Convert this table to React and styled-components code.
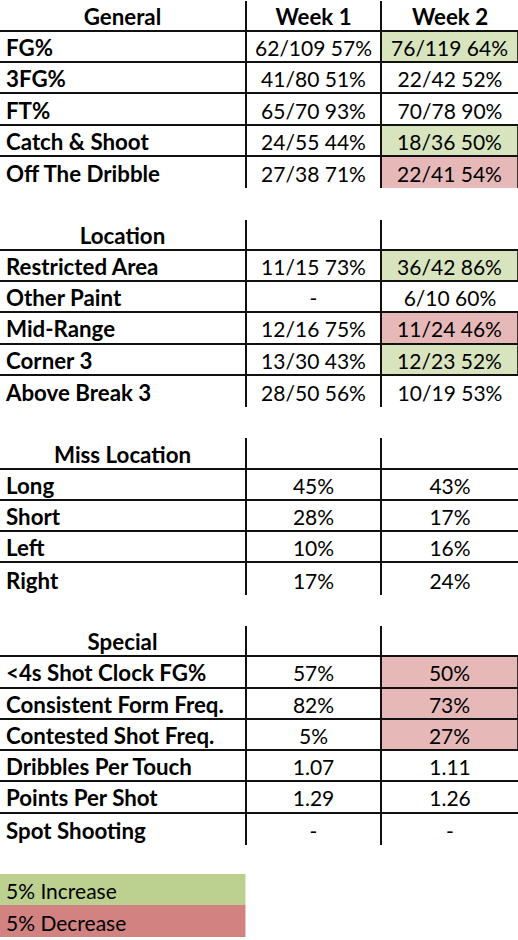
import styled, { createGlobalStyle } from "styled-components";

const Global = createGlobalStyle`
  html, body {
    margin: 0;
    padding: 0;
    background: #ffffff;
  }
  body {
    font-family: Lato, "Liberation Sans", sans-serif;
    color: #000;
  }
`;

const ROW = 31.28;

const Sheet = styled.div`
  width: 518px;
  padding-top: 0.7px;
  display: flex;
  flex-direction: column;
`;

const Section = styled.div`
  display: flex;
  flex-direction: column;
  margin-bottom: ${ROW}px;
`;

const Row = styled.div`
  display: grid;
  grid-template-columns: 245px 135px 1fr;
  height: ${ROW}px;
  box-sizing: border-box;
  border-bottom: ${(p) => (p.$last ? "none" : "2px solid #111")};
`;

const Cell = styled.div`
  display: flex;
  align-items: center;
  justify-content: ${(p) => (p.$left ? "flex-start" : "center")};
  padding: 2px 0 0 ${(p) => (p.$left ? "6px" : "0")};
  font-size: ${(p) => (p.$bold ? "22.3px" : "21px")};
  font-weight: ${(p) => (p.$bold ? 700 : 400)};
  white-space: nowrap;
  box-sizing: border-box;
  background: ${(p) =>
    p.$tone === "up" ? "#d7e4bd" : p.$tone === "down" ? "#e6b9b8" : "transparent"};
  border-left: ${(p) => (p.$divider ? "2px solid #111" : "none")};
  border-right: ${(p) => (p.$edge ? "1px solid #333" : "none")};
`;

const Legend = styled.div`
  width: 246px;
  display: flex;
  flex-direction: column;
  margin-top: -2px;
`;

const Swatch = styled.div`
  height: ${ROW}px;
  display: flex;
  align-items: center;
  padding: 2px 0 0 6px;
  box-sizing: border-box;
  font-size: 21px;
  background: ${(p) => (p.$tone === "up" ? "#bcd18f" : "#d18281")};
  border-right: 1px solid
    ${(p) => (p.$tone === "up" ? "#dfe9c8" : "#ecc4c3")};
`;

const sections = [
  {
    title: "General",
    heads: ["Week 1", "Week 2"],
    rows: [
      ["FG%", "62/109 57%", "76/119 64%", "up"],
      ["3FG%", "41/80 51%", "22/42 52%"],
      ["FT%", "65/70 93%", "70/78 90%"],
      ["Catch & Shoot", "24/55 44%", "18/36 50%", "up"],
      ["Off The Dribble", "27/38 71%", "22/41 54%", "down"],
    ],
  },
  {
    title: "Location",
    heads: ["", ""],
    rows: [
      ["Restricted Area", "11/15 73%", "36/42 86%", "up"],
      ["Other Paint", "-", "6/10 60%"],
      ["Mid-Range", "12/16 75%", "11/24 46%", "down"],
      ["Corner 3", "13/30 43%", "12/23 52%", "up"],
      ["Above Break 3", "28/50 56%", "10/19 53%"],
    ],
  },
  {
    title: "Miss Location",
    heads: ["", ""],
    rows: [
      ["Long", "45%", "43%"],
      ["Short", "28%", "17%"],
      ["Left", "10%", "16%"],
      ["Right", "17%", "24%"],
    ],
  },
  {
    title: "Special",
    heads: ["", ""],
    rows: [
      ["<4s Shot Clock FG%", "57%", "50%", "down"],
      ["Consistent Form Freq.", "82%", "73%", "down"],
      ["Contested Shot Freq.", "5%", "27%", "down"],
      ["Dribbles Per Touch", "1.07", "1.11"],
      ["Points Per Shot", "1.29", "1.26"],
      ["Spot Shooting", "-", "-"],
    ],
  },
];

const App = () => {
  return (
    <>
      <Global />
      <Sheet>
        {sections.map((s) => (
          <Section key={s.title}>
            <Row>
              <Cell $bold>{s.title}</Cell>
              <Cell $bold $divider>
                {s.heads[0]}
              </Cell>
              <Cell $bold $divider>
                {s.heads[1]}
              </Cell>
            </Row>
            {s.rows.map(([label, w1, w2, tone], i) => (
              <Row key={label} $last={i === s.rows.length - 1}>
                <Cell $bold $left>
                  {label}
                </Cell>
                <Cell $divider>{w1}</Cell>
                <Cell $divider $tone={tone} $edge={!!tone}>
                  {w2}
                </Cell>
              </Row>
            ))}
          </Section>
        ))}
        <Legend>
          <Swatch $tone="up">5% Increase</Swatch>
          <Swatch $tone="down">5% Decrease</Swatch>
        </Legend>
      </Sheet>
    </>
  );
};

export default App;
